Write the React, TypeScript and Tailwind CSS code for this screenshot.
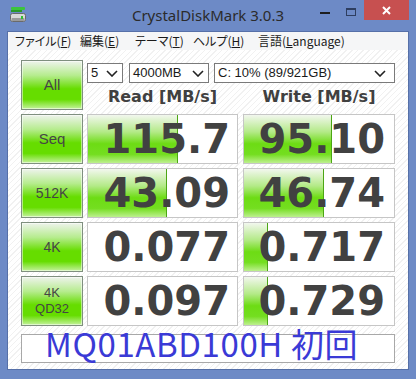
const menus = [
  { pre: 'ファイル(', key: 'F', post: ')', w: 'w-[65px]' },
  { pre: '編集(', key: 'E', post: ')', w: 'w-[55px]' },
  { pre: 'テーマ(', key: 'T', post: ')', w: 'w-[58px]' },
  { pre: 'ヘルプ(', key: 'H', post: ')', w: 'w-[65px]' },
  { pre: '言語(', key: 'L', post: 'anguage)', w: 'w-auto' },
];

const rows = [
  { label: ['Seq'], read: '115.7', readBar: 90, write: '95.10', writeBar: 88 },
  { label: ['512K'], read: '43.09', readBar: 79, write: '46.74', writeBar: 80 },
  { label: ['4K'], read: '0.077', readBar: 0, write: '0.717', writeBar: 24 },
  { label: ['4K', 'QD32'], read: '0.097', readBar: 0, write: '0.729', writeBar: 24 },
];

const btn =
  'flex flex-col items-center justify-center border border-[#7f8f7f] bg-[linear-gradient(to_bottom,#eef3ec_0%,#b6ec8e_30%,#66dd00_58%,#66dd00_80%,#c4f29c_100%)] text-[#454545] leading-[16px] shadow-[inset_0_0_0_1px_rgba(255,255,255,0.5)]';

function Chevron() {
  return (
    <svg width="12" height="7" viewBox="0 0 12 7" className="shrink-0">
      <polyline points="1,1 6,6 11,1" fill="none" stroke="#222" strokeWidth="1.6" />
    </svg>
  );
}

function Cell({ value, bar, w, pr }: { value: string; bar: number; w: string; pr: string }) {
  return (
    <div className={`relative ${w} h-[50px] border border-[#c6c6c6] bg-white flex items-center justify-end ${pr}`}>
      {bar > 0 && (
        <div
          className="absolute left-0 top-0 bottom-0 border-r border-[#4ca614] bg-[linear-gradient(to_bottom,#f2f7ee_0%,#b4ea88_35%,#6ddc14_60%,#74de20_82%,#bdf08e_100%)]"
          style={{ width: bar }}
        />
      )}
      <span className="relative font-['DejaVu_Sans',sans-serif] font-bold text-[40px] leading-none text-[#414141]">{value}</span>
    </div>
  );
}

export default function App() {
  return (
    <div className="w-[416px] h-[379px] bg-[#6d8ac6] flex flex-col font-['Liberation_Sans',sans-serif] overflow-hidden">
      <div className="h-[31px] shrink-0 grid grid-cols-[1fr_auto_1fr]">
        <div className="flex items-start pl-[10px] pt-[7px]">
          <svg width="16" height="16" viewBox="0 0 16 16">
            <rect x="1" y="0" width="14" height="3" rx="1" fill="#3cc43c" />
            <rect x="1" y="3" width="11" height="2" fill="#2a9a2a" />
            <rect x="0.5" y="6.5" width="15" height="8" rx="2" fill="#d8d8d8" stroke="#6a6a6a" />
            <rect x="1.5" y="11" width="13" height="3" rx="1" fill="#9a9a9a" />
            <rect x="11" y="9" width="2" height="3" fill="#30c030" />
          </svg>
        </div>
        <div className="flex items-center pb-[1px] font-['Noto_Sans',sans-serif] text-[15px] text-[#2b2b2b]">
          CrystalDiskMark 3.0.3
        </div>
        <div className="flex items-start justify-end pr-[7px]">
          <div className="w-[26px] h-[20px] flex items-center justify-center">
            <div className="w-[10px] h-[2px] bg-[#1e1e1e] mt-[6px]" />
          </div>
          <div className="w-[26px] h-[20px] flex items-start justify-center pt-[8px]">
            <div className="w-[10px] h-[8px] border border-[#2e3e60] border-t-2" />
          </div>
          <div className="w-[45px] h-[20px] bg-[#c75050] flex items-center justify-center">
            <svg width="9" height="9" viewBox="0 0 9 9">
              <path d="M1 1 L8 8 M8 1 L1 8" stroke="#fff" strokeWidth="2" />
            </svg>
          </div>
        </div>
      </div>

      <div className="flex-1 mx-[7px] mb-[9px] border border-[#5670a8] flex flex-col">
        <div className="h-[18px] shrink-0 bg-[#f5f6f7] flex items-center pl-[7px] font-['Noto_Sans_CJK_JP',sans-serif] [font-feature-settings:'palt'] text-[12px] text-[#1a1a1a]">
          {menus.map((m) => (
            <div key={m.key} className={`${m.w} whitespace-nowrap`}>
              {m.pre}
              <span className="underline">{m.key}</span>
              {m.post}
            </div>
          ))}
        </div>

        <div className="flex-1 bg-[#fafafa] bg-[image:repeating-linear-gradient(135deg,#ffffff_0px,#ffffff_3px,#f1f1f1_3px,#f1f1f1_4px)] pt-[10px] pl-[13px] flex flex-col gap-[4px]">
          <div className="flex h-[50px]">
            <div className={`${btn} w-[62px] h-[50px] text-[15px]`}>All</div>
            <div className="ml-[4px] w-[308px] flex flex-col">
              <div className="mt-[3px] h-[20px] flex text-[13px] text-[#1a1a1a]">
                <div className="w-[36px] border border-[#7a7a7a] bg-white flex items-center justify-between pl-[3px] pr-[4px]">
                  <span>5</span>
                  <Chevron />
                </div>
                <div className="ml-[6px] w-[80px] border border-[#7a7a7a] bg-white flex items-center justify-between pl-[3px] pr-[4px]">
                  <span>4000MB</span>
                  <Chevron />
                </div>
                <div className="ml-[5px] w-[181px] border border-[#7a7a7a] bg-white flex items-center justify-between pl-[3px] pr-[8px]">
                  <span>C: 10% (89/921GB)</span>
                  <Chevron />
                </div>
              </div>
              <div className="flex-1 flex items-center font-['DejaVu_Sans',sans-serif] font-bold text-[16px] text-[#404040]">
                <div className="w-[151px] text-center">Read [MB/s]</div>
                <div className="ml-[5px] w-[152px] text-center">Write [MB/s]</div>
              </div>
            </div>
          </div>

          {rows.map((r) => (
            <div key={r.read} className="flex h-[50px]">
              <div className={`${btn} w-[62px] h-[50px] ${r.label.length > 1 ? 'text-[13px]' : r.label[0] === 'Seq' ? 'text-[15px]' : 'text-[14px]'}`}>
                {r.label.map((l) => (
                  <span key={l}>{l}</span>
                ))}
              </div>
              <div className="ml-[4px] flex">
                <Cell value={r.read} bar={r.readBar} w="w-[151px]" pr="pr-[7px]" />
                <div className="w-[5px]" />
                <Cell value={r.write} bar={r.writeBar} w="w-[152px]" pr="pr-[9px]" />
              </div>
            </div>
          ))}

          <div className="mt-[4px] w-[374px] h-[29px] border border-[#a8a8a8] bg-white pl-[23px]">
            <span className="block leading-[16px] font-['Noto_Sans_CJK_JP',sans-serif] text-[33px] tracking-[0.6px] text-[#3a3ad6] whitespace-nowrap">
              MQ01ABD100H 初回
            </span>
          </div>
        </div>
      </div>
    </div>
  );
}
